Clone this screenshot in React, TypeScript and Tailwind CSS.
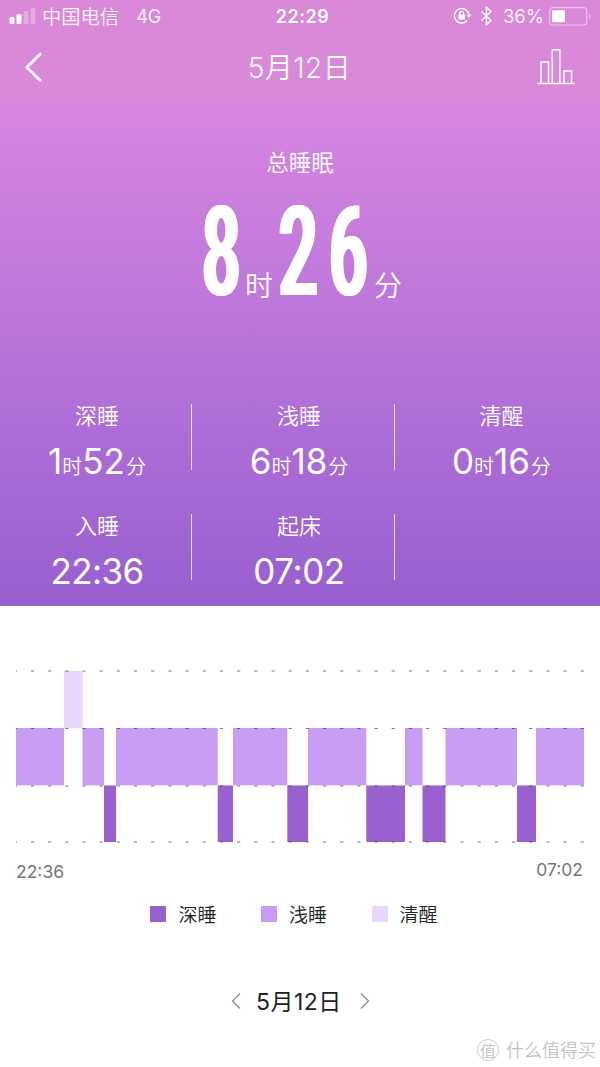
import { ReactNode } from "react"

type Stage = "awake" | "light" | "deep"

const STAGE_COLOR: Record<Stage, string> = {
  deep: "#9a60d0",
  light: "#c89df3",
  awake: "#e8d6fc",
}

const STAGE_TOP: Record<Stage, number> = { awake: 1, light: 58, deep: 115.5 }

// offsets on the 568px wide time axis
const segments: { stage: Stage; from: number; to: number }[] = [
  { stage: "light", from: 0, to: 48 },
  { stage: "awake", from: 48, to: 66.5 },
  { stage: "light", from: 66.5, to: 88 },
  { stage: "deep", from: 88, to: 100 },
  { stage: "light", from: 100, to: 201.7 },
  { stage: "deep", from: 201.7, to: 217 },
  { stage: "light", from: 217, to: 271.3 },
  { stage: "deep", from: 271.3, to: 292 },
  { stage: "light", from: 292, to: 350.3 },
  { stage: "deep", from: 350.3, to: 389 },
  { stage: "light", from: 389, to: 406.5 },
  { stage: "deep", from: 406.5, to: 429.5 },
  { stage: "light", from: 429.5, to: 501 },
  { stage: "deep", from: 501, to: 520 },
  { stage: "light", from: 520, to: 568 },
]

function StatusBar() {
  return (
    <div className="flex h-8 items-center justify-between pl-[9px] pr-[8px] text-[18px] text-white/90">
      <div className="flex w-[200px] items-center">
        <svg width="28" height="16" viewBox="0 0 28 16" fill="#fff">
          <rect x="0.5" y="9" width="5" height="7" rx="1.5" />
          <rect x="7.5" y="6" width="5" height="10" rx="1.5" />
          <rect x="14.5" y="3" width="5" height="13" rx="1.5" opacity=".3" />
          <rect x="21.5" y="0" width="5" height="16" rx="1.5" opacity=".3" />
        </svg>
        <span className="ml-[5px] pt-[2px] text-[19.3px] font-[350]">中国电信</span>
        <span className="ml-[17px] pt-px font-[380]">4G</span>
      </div>
      <span className="pt-px pl-[4px] text-[18px] font-semibold tracking-[0.5px] text-white">22:29</span>
      <div className="flex w-[200px] items-center justify-end">
        <svg width="19" height="18" viewBox="0 0 19 18" fill="none" stroke="#fff" strokeWidth="1.5">
          <path d="M14.2 13.6A7.3 7.3 0 1 1 16 8" />
          <path d="M13.3 7.7h5.2L16 11z" fill="#fff" stroke="none" />
          <rect x="5.4" y="7.6" width="6.6" height="5" rx="0.6" fill="#fff" stroke="none" />
          <path d="M6.8 8V6.2a1.9 1.9 0 0 1 3.8 0V8" strokeWidth="1.2" />
        </svg>
        <svg className="ml-[8px]" width="13" height="20" viewBox="0 0 13 20" fill="none" stroke="#fff" strokeWidth="1.5">
          <path d="M1.500 5.500l9.500 9L6.400 18.600V1.400l4.600 4.100L1.500 14.500" />
        </svg>
        <span className="ml-[10px] pt-px text-[18.5px] font-[380]">36%</span>
        <svg className="ml-[5px]" width="43" height="19" viewBox="0 0 43 19" fill="none">
          <rect x="0.7" y="0.7" width="37" height="17.3" rx="3" stroke="#fff" strokeOpacity=".5" strokeWidth="1.2" />
          <rect x="3" y="3.3" width="13" height="12" rx="1" fill="#fff" />
          <path d="M40 6.5c2 .8 2 5 0 5.8z" fill="#fff" fillOpacity=".5" />
        </svg>
      </div>
    </div>
  )
}

function NavBar() {
  return (
    <div className="flex h-[70px] items-center justify-between pl-[24px] pr-[25px]">
      <svg width="38" height="32" viewBox="0 0 38 32" fill="none" stroke="#fff" strokeWidth="2.7" strokeLinecap="round" strokeLinejoin="round">
        <path d="M16.3 3L2.7 16.3L16.3 29.5" />
      </svg>
      <h1 className="pt-[2px] text-[28px] font-[330] tracking-[0.5px] text-white">5月12日</h1>
      <svg width="38" height="36" viewBox="0 0 38 36" fill="none" stroke="#fff" strokeWidth="1.5">
        <path d="M0.5 34.5h37M4 34V13h7.500v21M15.300 34V.8h7.500V34M27 34V22h7.500v12" />
      </svg>
    </div>
  )
}

// sideways shadows widen the stems only, the horizontals keep their weight
function BigDigit({ children }: { children: ReactNode }) {
  return (
    <span className="flex w-[38px] justify-center">
      <span className="block origin-center scale-x-[0.65] font-['Roboto'] text-[125px] leading-[91px] font-[470] [font-stretch:75%] [text-shadow:-2.5px_0_0_#fff,-1.5px_0_0_#fff,1.5px_0_0_#fff,2.5px_0_0_#fff]">
        {children}
      </span>
    </span>
  )
}

function Duration({ hours, minutes }: { hours: number; minutes: number }) {
  return (
    <>
      {hours}
      <span className="text-[20px] font-[350]">时</span>
      {minutes}
      <span className="ml-px text-[20px] font-[350]">分</span>
    </>
  )
}

function Stat({ label, className = "", children }: { label?: string; className?: string; children?: ReactNode }) {
  return (
    <div className={`flex h-[110px] flex-col items-center ${className}`}>
      <div className="h-[33px] pt-px text-[22px] leading-[33px] font-[350]">{label}</div>
      <div className="mt-[5px] text-[35px] leading-[48px] font-[380] whitespace-nowrap">{children}</div>
    </div>
  )
}

function Divider() {
  return <div className="mt-[5px] h-[66px] w-px bg-white/75" />
}

function SleepChart() {
  return (
    <svg className="block" width="568" height="174" viewBox="0 0 568 174">
      {segments.map((s) => (
        <rect key={s.from} x={s.from} y={STAGE_TOP[s.stage]} width={s.to - s.from} height={s.stage === "deep" ? 56.5 : 57.3} fill={STAGE_COLOR[s.stage]} />
      ))}
      {[1, 58.5, 116, 172].map((y) => (
        <line key={y} x1="0" x2="568" y1={y} y2={y} stroke="#333" strokeOpacity=".65" strokeWidth="1.2" strokeDasharray="3.2 13.98" strokeDashoffset="2.3" />
      ))}
    </svg>
  )
}

function LegendItem({ color, label }: { color: string; label: string }) {
  return (
    <div className="flex items-center gap-3">
      <span className={`size-4 ${color}`} />
      <span className="pt-[4px] text-[19px] leading-7 font-[350] text-[#222]">{label}</span>
    </div>
  )
}

export default function App() {
  return (
    <main className="h-[1067px] w-[600px] overflow-hidden bg-white font-['Inter','Noto_Sans_CJK_SC',sans-serif]">
      <header className="h-[102px] bg-[#da88d8]">
        <StatusBar />
        <NavBar />
      </header>

      <section className="h-[504px] bg-linear-to-b from-[#d886e2] to-[#985fd0] text-white">
        <div className="pt-[44px] text-center text-[22.5px] leading-[34px] font-[350]">总睡眠</div>
        <div className="mt-[23px] flex h-[95px] items-end pl-[202px]">
          <BigDigit>8</BigDigit>
          <span className="ml-[5px] text-[28px] leading-[24px] font-[350]">时</span>
          <span className="ml-[6px]">
            <BigDigit>2</BigDigit>
          </span>
          <span className="ml-[12px]">
            <BigDigit>6</BigDigit>
          </span>
          <span className="ml-[7px] text-[28px] leading-[24px] font-[350]">分</span>
        </div>

        <div className="mt-[101px] grid grid-cols-[191px_1px_202px_1px_205px]">
          <Stat label="深睡" className="pl-[3px]"><Duration hours={1} minutes={52} /></Stat>
          <Divider />
          <Stat label="浅睡" className="pl-[12px]"><Duration hours={6} minutes={18} /></Stat>
          <Divider />
          <Stat label="清醒" className="pl-[8px]"><Duration hours={0} minutes={16} /></Stat>
          <Stat label="入睡" className="pl-[3px]"><span className="tracking-[-0.6px]">22:36</span></Stat>
          <Divider />
          <Stat label="起床" className="pl-[12px]"><span className="tracking-[-0.4px]">07:02</span></Stat>
          <Divider />
          <Stat />
        </div>
      </section>

      <section className="px-4 pt-[64px]">
        <SleepChart />
        <div className="mt-[14px] flex justify-between pr-px text-[17.5px] leading-6 text-[#777]">
          <span className="pt-[2px]">22:36</span>
          <span>07:02</span>
        </div>
      </section>

      <div className="mt-[14px] flex justify-center gap-[44.5px] pr-[12px]">
        <LegendItem color="bg-[#9a60d0]" label="深睡" />
        <LegendItem color="bg-[#c89df3]" label="浅睡" />
        <LegendItem color="bg-[#e8d6fc]" label="清醒" />
      </div>

      <div className="mt-[54px] flex h-[34px] items-center pl-[231px] text-[#222]">
        <svg width="10" height="18" viewBox="0 0 10 18" fill="none" stroke="#888" strokeWidth="1.2">
          <path d="M9 1.5L1.5 9L9 16.5" />
        </svg>
        <span className="ml-[15px] w-[86px] pt-[2px] text-[23px] font-[380] tracking-[0.5px] whitespace-nowrap">5月12日</span>
        <svg className="ml-[18px]" width="10" height="18" viewBox="0 0 10 18" fill="none" stroke="#888" strokeWidth="1.2">
          <path d="M1 1.5L8.500 9L1 16.500" />
        </svg>
      </div>

      <div className="mt-[17px] flex items-center justify-end pr-[4px] text-[#c4c4c4]">
        <span className="flex size-[22px] items-center justify-center rounded-full border border-[#cfcfcf] pt-px text-[16px] font-[350]">值</span>
        <span className="ml-[7px] pt-[2px] text-[18px] leading-[28px] font-[350]">什么值得买</span>
      </div>
    </main>
  )
}
